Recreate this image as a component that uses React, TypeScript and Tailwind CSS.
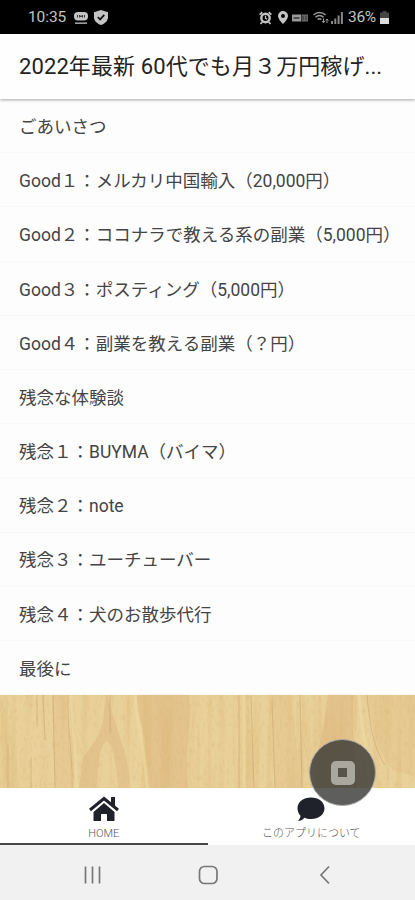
import type { ReactNode } from 'react';

const chapters = [
  'ごあいさつ',
  'Good１：メルカリ中国輸入（20,000円）',
  'Good２：ココナラで教える系の副業（5,000円）',
  'Good３：ポスティング（5,000円）',
  'Good４：副業を教える副業（？円）',
  '残念な体験談',
  '残念１：BUYMA（バイマ）',
  '残念２：note',
  '残念３：ユーチューバー',
  '残念４：犬のお散歩代行',
  '最後に',
];

function StatusBar() {
  return (
    <div className="flex h-[34px] shrink-0 items-center bg-black pt-px pr-[26px] pl-7 text-[#c4c4c4]">
      <span className="w-[46px] text-[15.500px] leading-none tracking-[-0.1px]">10:35</span>
      <svg className="h-[14px] w-[14px]" viewBox="0 0 14 14" fill="currentColor">
        <rect x="0" y="1" width="14" height="8.5" rx="4" />
        <path d="M3.500 4v2.500M5.500 6.500V4l1.500 2 1.500-2v2.500M10.500 4v2.500" fill="none" stroke="#333" strokeWidth="1" />
        <rect x="1" y="11.500" width="12" height="1.300" />
      </svg>
      <svg className="ml-[6px] h-[15px] w-[14px]" viewBox="0 0 14 15" fill="currentColor">
        <path d="M7 0l7 2.200v5c0 3.600-3 6.300-7 7.800-4-1.500-7-4.200-7-7.800v-5z" />
        <path d="M3.800 7l2.300 2.400 4.200-4.500" fill="none" stroke="#111" strokeWidth="1.700" />
      </svg>
      <div className="ml-auto flex items-center">
        <svg className="h-[14px] w-[13px]" viewBox="0 0 13 14" fill="none" stroke="currentColor">
          <circle cx="6.500" cy="7" r="4.200" strokeWidth="2.400" />
          <path d="M.6 3.600L3.300 1.300M12.400 3.600L9.700 1.300M3.300 11l-1.800 2M9.700 11l1.800 2" strokeWidth="1.800" />
          <path d="M6.500 4.800v2.500l1.700 1" strokeWidth="1.200" />
        </svg>
        <svg className="ml-[6px] h-[13px] w-[10px]" viewBox="0 0 10 13" fill="currentColor" fillRule="evenodd">
          <path d="M5 0a5 5 0 0 1 5 5c0 3.200-5 8-5 8S0 8.200 0 5a5 5 0 0 1 5-5zm0 2.900a2 2 0 1 0 0 4 2 2 0 0 0 0-4z" />
        </svg>
        <svg className="ml-1 h-2 w-4" viewBox="0 0 16 8">
          <rect x="0" y=".5" width="9" height="7" fill="#999" />
          <path d="M1.500 4h6" stroke="#333" strokeWidth="1.500" />
          <rect x="9.500" y=".5" width="6.500" height="7" fill="#666" />
          <path d="M11 2v4M14 2v4" stroke="#333" strokeWidth="1" />
        </svg>
        <svg className="ml-[5px] h-[13px] w-[16px]" viewBox="0 0 16 13" fill="none" stroke="#999">
          <path d="M.5 4c3.300-3.400 8.700-3.400 12 0M2.500 6.300c2.300-2.400 5.700-2.400 8 0M4.600 8.500c1.100-1.100 2.700-1.100 3.800 0" strokeWidth="1.500" />
          <path d="M10.500 7.500v4M9 10l1.500 1.800L12 10M14 12V8.500M12.800 9.500L14 8l1.400 1.500" strokeWidth="1" />
        </svg>
        <svg className="ml-[2px] h-[12px] w-[12px]" viewBox="0 0 12 12" fill="#888">
          <path d="M0 9h2v3H0zM3.300 6.500h2V12h-2zM6.600 3.500h2V12h-2zM9.900 0h2v12h-2z" />
        </svg>
        <span className="ml-[5px] w-[32px] text-[15.500px] leading-none tracking-[-0.300px]">36%</span>
        <svg className="h-[13px] w-[9px]" viewBox="0 0 9 13">
          <path d="M2.500 0h4v1.500H9V7H0V1.500h2.500z" fill="#444" />
          <path d="M0 7h9v6H0z" fill="#ddd" />
        </svg>
      </div>
    </div>
  );
}

// Pale pine board behind the list
function WoodPanel() {
  return (
    <svg className="h-[93px] w-full shrink-0" viewBox="0 0 415 93" preserveAspectRatio="none">
      <defs>
        <filter id="grain" x="0" y="0" width="100%" height="100%" colorInterpolationFilters="sRGB">
          <feTurbulence type="fractalNoise" baseFrequency="0.12 0.006" numOctaves="3" seed="8" />
          <feColorMatrix values="0 0 0 0 0.84  0 0 0 0 0.68  0 0 0 0 0.43  2 0 0 0 -0.850" />
        </filter>
        <filter id="fleck" x="0" y="0" width="100%" height="100%" colorInterpolationFilters="sRGB">
          <feTurbulence type="fractalNoise" baseFrequency="0.4 0.15" numOctaves="2" seed="3" />
          <feColorMatrix values="0 0 0 0 0.82  0 0 0 0 0.63  0 0 0 0 0.4  3 0 0 0 -1.500" />
        </filter>
      </defs>
      <rect width="415" height="93" fill="#e9d29a" />
      <rect width="415" height="93" filter="url(#grain)" opacity="0.45" />
      <rect width="415" height="93" filter="url(#fleck)" opacity="0.2" />
      <g fill="#dcb27a" opacity="0.42">
        <path d="M106 0c-2 20-3 30-8 42l-15 20-4 31h18c2-30 3-42 9-46s10 20 12 46h12c0-35-16-60-22-93z" />
        <path d="M137 0c0 25 9 35 9 58l4 35h38c-4-40 4-60 1-93z" />
        <path d="M328 0c-3 30-13 60-13 93h42c-2-40-6-60-3-93z" />
        <path d="M366 0c5 30 12 60 27 75l22 7V0z" opacity="0.6" />
        <path d="M52 0h15c0 35 5 60 4 93H55zM272 0h20l8 93h-25z" opacity="0.6" />
      </g>
      <g fill="none" stroke="#c9a06c" strokeWidth="1" opacity="0.55">
        <path d="M37 0v32M43 0l2 45M53 0l2 93M68 0c-1 35 5 60 4 93M110 0v38M239 0v93M251 0l3 93M272 5l3 88M300 0l2 93M367 0c3 35 8 55 18 70M8 50v43M31 62v31" />
      </g>
      <g fill="none" stroke="#eedaa2" strokeWidth="3" opacity="0.6">
        <path d="M72 0c-1 35 5 60 4 93M135 0c0 25 9 40 12 93M244 0v93M359 0c2 40 11 60 10 93" />
      </g>
    </svg>
  );
}

function Tab({ label, active, children }: { label: string; active?: boolean; children: ReactNode }) {
  return (
    <div className={`flex flex-1 flex-col items-center border-b-2 pt-2 text-[#20222b] ${active ? 'border-[#48484b]' : 'border-transparent'}`}>
      {children}
      <span className="mt-1 text-[11px] leading-[15px] font-light text-[#555]">{label}</span>
    </div>
  );
}

export default function App() {
  return (
    <div className="relative flex h-[900px] w-[415px] flex-col overflow-hidden bg-[#fdfdfd] font-[Roboto,'Noto_Sans_CJK_JP',sans-serif]">
      <StatusBar />

      <header className="z-10 flex h-[65px] shrink-0 items-center bg-[#fefefe] pl-[19px] shadow-[0_1px_3px_rgba(0,0,0,0.35)]">
        <h1 className="text-[22px] font-normal tracking-[0.100px] whitespace-nowrap text-[#222]">2022年最新 60代でも月３万円稼げ...</h1>
      </header>

      <ul className="h-[596px] shrink-0">
        {chapters.map((chapter) => (
          <li key={chapter} className="flex h-[54.200px] items-center border-b border-[#f8f8f8] pt-[3px] pl-[19px] text-[17.500px] font-normal whitespace-nowrap text-[#444]">
            {chapter}
          </li>
        ))}
      </ul>

      <WoodPanel />

      <nav className="flex h-[57px] shrink-0 bg-white">
        <Tab label="HOME" active>
          <svg className="h-[26px] w-[32px]" viewBox="0 0 32 26">
            <path d="M2 14L16 2.500 30 14" fill="none" stroke="currentColor" strokeWidth="3" />
            <path d="M23 1h4v10l-4-3.500zM16 7l10.500 9v9H19v-7h-6v7H5.500v-9z" fill="currentColor" />
          </svg>
        </Tab>
        <Tab label="このアプリについて">
          <svg className="h-[26px] w-[28px]" viewBox="0 0 28 26" fill="currentColor">
            <path d="M14 1.500c7.700 0 13.500 4.500 13.500 10.700S21.700 23 14 23c-2.500 0-4.700-.5-6.600-1.300C5.600 23.800 3.500 25 1 25c1.400-1.500 2.400-3.300 2.500-5.300C1.500 17.700.5 15 .5 12.200.5 6 6.300 1.500 14 1.500z" />
          </svg>
        </Tab>
      </nav>

      <div className="flex h-[55px] shrink-0 items-center bg-[#f1f1f1] text-[#777]">
        <svg className="mt-1 h-5 w-full" viewBox="0 0 415 20" fill="none" stroke="currentColor" strokeWidth="1.700">
          <path d="M85.500 1.500v17M92.500 1.500v17M99.500 1.500v17M329 1.500l-8 8.500 8 8.500" />
          <rect x="199.500" y="1.500" width="17.500" height="17" rx="5" />
        </svg>
      </div>

      {/* floating screen recorder button */}
      <div className="absolute top-[739px] left-[309px] z-20 flex size-[67px] items-center justify-center rounded-full border border-[#aaa] bg-[#3b3b38]/82">
        <div className="flex size-6 items-center justify-center rounded-[5px] bg-[#aaa89e]">
          <div className="size-[9px] bg-[#56544a]" />
        </div>
      </div>
    </div>
  );
}
